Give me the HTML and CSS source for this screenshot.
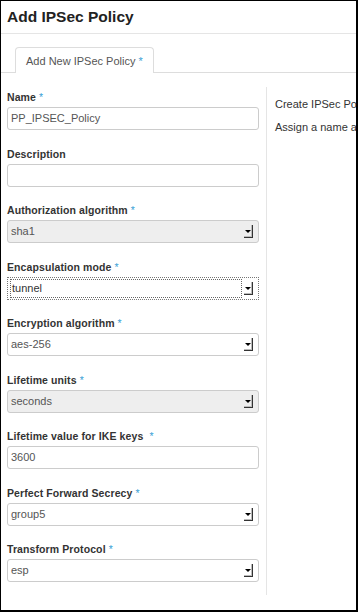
FILE: index.html
```html
<!DOCTYPE html>
<html lang="en">
<head>
    <meta charset="UTF-8">
    <meta name="viewport" content="width=device-width, initial-scale=1.0">
    <title>Add IPSec Policy</title>
    <link rel="stylesheet" href="styles.css">
</head>
<body>

<div class="modal">
    <div class="modal-header">
        <h1>Add IPSec Policy</h1>
    </div>

    <ul class="nav-tabs">
        <li class="active">Add New IPSec Policy <span class="req">*</span></li>
    </ul>

    <div class="tab-body">
        <form class="form-col">
            <div class="form-group">
                <label>Name <span class="req">*</span></label>
                <div class="field">PP_IPSEC_Policy</div>
            </div>

            <div class="form-group">
                <label>Description</label>
                <div class="field"></div>
            </div>

            <div class="form-group">
                <label>Authorization algorithm <span class="req">*</span></label>
                <div class="field select disabled">sha1<span class="arrow"></span></div>
            </div>

            <div class="form-group">
                <label>Encapsulation mode <span class="req">*</span></label>
                <div class="field select focused"><span class="focus-text">tunnel</span><span class="arrow"></span></div>
            </div>

            <div class="form-group">
                <label>Encryption algorithm <span class="req">*</span></label>
                <div class="field select">aes-256<span class="arrow"></span></div>
            </div>

            <div class="form-group">
                <label>Lifetime units <span class="req">*</span></label>
                <div class="field select disabled">seconds<span class="arrow"></span></div>
            </div>

            <div class="form-group">
                <label>Lifetime value for IKE keys &nbsp;<span class="req">*</span></label>
                <div class="field">3600</div>
            </div>

            <div class="form-group">
                <label>Perfect Forward Secrecy <span class="req">*</span></label>
                <div class="field select">group5<span class="arrow"></span></div>
            </div>

            <div class="form-group">
                <label>Transform Protocol <span class="req">*</span></label>
                <div class="field select">esp<span class="arrow"></span></div>
            </div>
        </form>

        <div class="help-col">
            <p>Create IPSec Policy for current project.</p>
            <p>Assign a name and description for the IPSec Policy.</p>
        </div>
    </div>
</div>

</body>
</html>
```

FILE: styles.css
```css
html, body {
    margin: 0;
    padding: 0;
}
body {
    font-family: 'Liberation Sans', Arial, sans-serif;
    background-color: white;
    color: #333;
}
.modal {
    box-sizing: border-box;
    width: 358px;
    height: 612px;
    border-top: 1px solid #000;
    border-left: 1px solid #000;
    border-right: 2px solid #000;
    border-bottom: 2px solid #000;
    overflow: hidden;
}
.modal-header {
    height: 32px;
    border-bottom: 1px solid #e5e5e5;
    padding: 0 6px;
}
h1 {
    margin: 0;
    font-size: 15.5px;
    line-height: 31px;
    font-weight: bold;
    color: #222;
}
.nav-tabs {
    list-style: none;
    margin: 13px 0 0;
    padding: 0 0 0 14px;
    border-bottom: 1px solid #ddd;
    display: flex;
}
.nav-tabs li {
    font-size: 11px;
    color: #555;
    padding: 0 10px 0 10px;
    height: 25px;
    line-height: 26px;
    border: 1px solid #ddd;
    border-bottom: none;
    border-radius: 4px 4px 0 0;
    margin-bottom: -1px;
    background-color: white;
    white-space: nowrap;
}
.req {
    color: #3a9fd6;
    font-weight: normal;
}
.tab-body {
    display: flex;
}
.form-col {
    width: 252px;
    padding: 17px 0 0 6px;
    margin: 0;
}
.form-group {
    margin-bottom: 16.5px;
}
label {
    display: block;
    font-size: 10.5px;
    font-weight: bold;
    color: #333;
    line-height: 14px;
    margin-bottom: 3px;
    letter-spacing: 0.1px;
}
.field {
    position: relative;
    box-sizing: border-box;
    height: 23px;
    border: 1px solid #ccc;
    border-radius: 3px;
    padding: 0 3px;
    font-size: 11px;
    line-height: 21px;
    color: #555;
    background-color: white;
}
.field.disabled {
    background-color: #eee;
}
.field.focused {
    border: 1px dotted #777;
    border-radius: 0;
    padding: 1px 2px;
    line-height: 17px;
    color: #333;
}
.focus-text {
    display: block;
    border: 1px dotted #666;
    height: 17px;
    line-height: 17px;
    padding-left: 1px;
    margin-right: 14px;
}
.arrow {
    position: absolute;
    right: 5px;
    top: 4px;
    width: 8px;
    height: 12px;
    border-right: 1px solid #333;
    border-bottom: 1px solid #333;
    box-shadow: inset -1px -1px 0 #bbb;
}
.arrow::after {
    content: "";
    position: absolute;
    left: 1px;
    top: 5px;
    border-left: 3px solid transparent;
    border-right: 3px solid transparent;
    border-top: 3px solid #000;
}
.help-col {
    margin-left: 7px;
    margin-top: 14px;
    border-left: 1px solid #e5e5e5;
    padding-left: 8px;
    padding-top: 8px;
    flex: 1;
    white-space: nowrap;
    overflow: hidden;
    font-size: 11px;
    color: #333;
    height: 500px;
}
.help-col p {
    margin: 3px 0 10px;
    line-height: 13px;
}
```
